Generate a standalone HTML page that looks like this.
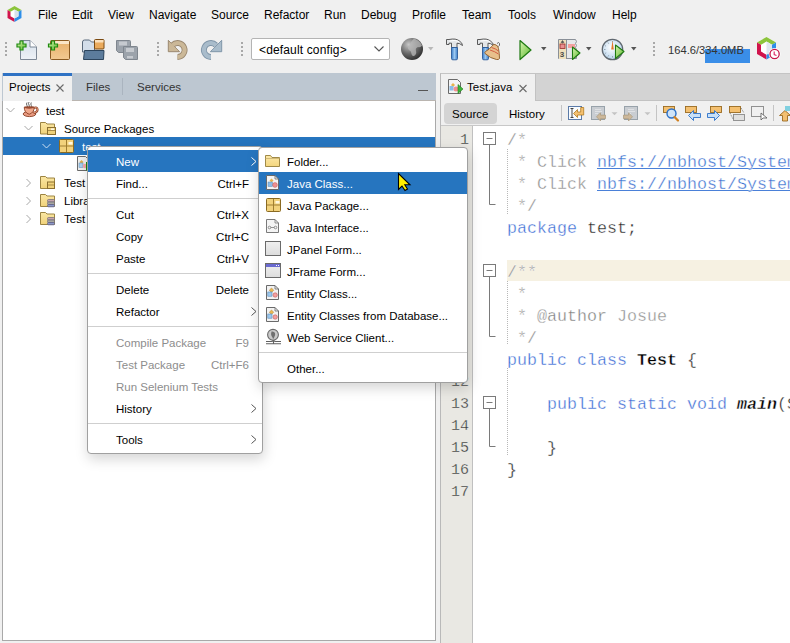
<!DOCTYPE html>
<html><head><meta charset="utf-8">
<style>
*{margin:0;padding:0;box-sizing:border-box}
html,body{width:790px;height:643px;overflow:hidden;background:#f0f0f0;font-family:"Liberation Sans",sans-serif;font-size:11.5px;color:#000}
.a{position:absolute;white-space:nowrap}
.mb{top:7px;font-size:12px;line-height:16px}
.tb svg{position:absolute}
.dots{position:absolute;width:2px;height:14px;background:repeating-linear-gradient(#a8a8a8 0 2px,transparent 2px 4px)}
#left{position:absolute;left:2px;top:73px;width:434px;height:568px;border:1px solid #a9a9a9;border-top:none;background:#fff}
#ltabs{position:absolute;left:2px;top:73px;width:434px;height:28px;background:#bdc7d1}
.row{position:absolute;left:3px;width:432px;height:18px;line-height:18px}
.row span{top:1px}
.code{font-family:"Liberation Mono",monospace;font-size:16.67px;line-height:22px;-webkit-text-stroke:0.35px #fff}
.cm{color:#8e8e8e}.kw{color:#3a6ad4}.lk{color:#3a6fd0;background:linear-gradient(#4a80d8,#4a80d8) 0 calc(100% - 3px)/100% 1px no-repeat}.code div{white-space:pre;height:22px}.code b{font-weight:bold;color:#000}
.ln{position:absolute;left:441px;width:28px;text-align:right;font-family:"Liberation Mono",monospace;font-size:15px;line-height:22px;color:#333;-webkit-text-stroke:0.3px #e9e8e3}
.pop{position:absolute;background:#fff;border:1px solid #a0a0a0;border-radius:4px;box-shadow:1px 5px 13px rgba(0,0,0,.17)}
.mi{position:absolute;left:0;right:0;height:22px;line-height:22px}
.mi .t{position:absolute;left:28px;top:1px}
.mi .k{position:absolute;right:13px;top:1px}
.hl{background:#2675bf;color:#fff}
.dis{color:#8d8d8d}
.sep{position:absolute;left:0;right:0;height:1px;background:#cfcfcf}
.arr{position:absolute;right:5px;top:7px;width:6px;height:9px}
</style></head><body>

<!-- menubar -->
<svg class="a" style="left:5.5px;top:5px" width="17" height="18" viewBox="0 0 17 18">
<path d="M8.5 1 L15.5 5 L15.5 13 L8.5 17 L1.5 13 L1.5 5 Z" fill="#fff"/>
<path d="M8.5 1 L15.5 5 L12.5 6.7 L8.5 4.4 L4.5 6.7 L1.5 5 Z" fill="#8cc43c"/>
<path d="M1.5 5 L4.5 6.7 L4.5 11.3 L8.5 13.6 L8.5 17 L1.5 13 Z" fill="#d0144c"/>
<path d="M15.5 5 L15.5 13 L8.5 17 L8.5 13.6 L12.5 11.3 L12.5 6.7 Z" fill="#2e8ee8"/>
<path d="M8.5 4.4 L12.5 6.7 L12.5 11.3 L8.5 13.6 Z" fill="#d8e2ec"/>
</svg>
<div class="a mb" style="left:38px">File</div>
<div class="a mb" style="left:72px">Edit</div>
<div class="a mb" style="left:108px">View</div>
<div class="a mb" style="left:149px">Navigate</div>
<div class="a mb" style="left:211px">Source</div>
<div class="a mb" style="left:264px">Refactor</div>
<div class="a mb" style="left:324px">Run</div>
<div class="a mb" style="left:361px">Debug</div>
<div class="a mb" style="left:412px">Profile</div>
<div class="a mb" style="left:462px">Team</div>
<div class="a mb" style="left:508px">Tools</div>
<div class="a mb" style="left:553px">Window</div>
<div class="a mb" style="left:612px">Help</div>

<!-- toolbar -->
<svg class="a" style="left:0;top:0" width="790" height="70" viewBox="0 0 790 70">
<defs>
<linearGradient id="gPage" x1="0" y1="0" x2="0" y2="1"><stop offset="0" stop-color="#d5dfea"/><stop offset="1" stop-color="#eef2f7"/></linearGradient>
<linearGradient id="gBox" x1="0" y1="0" x2="0" y2="1"><stop offset="0" stop-color="#e8b06a"/><stop offset="1" stop-color="#f2c992"/></linearGradient>
<linearGradient id="gGreen" x1="0" y1="0" x2="1" y2="1"><stop offset="0" stop-color="#d8f5b0"/><stop offset="1" stop-color="#5cb82e"/></linearGradient>
<radialGradient id="gGlobe" cx="0.35" cy="0.3" r="0.75"><stop offset="0" stop-color="#c8c8c8"/><stop offset="0.55" stop-color="#6a6a6a"/><stop offset="1" stop-color="#2e2e2e"/></radialGradient>
<linearGradient id="gBlue" x1="0" y1="0" x2="1" y2="0"><stop offset="0" stop-color="#3a7cc8"/><stop offset="0.5" stop-color="#9cc8f0"/><stop offset="1" stop-color="#3a7cc8"/></linearGradient>
<radialGradient id="gClock" cx="0.45" cy="0.4" r="0.6"><stop offset="0" stop-color="#ffffff"/><stop offset="1" stop-color="#b8d4ec"/></radialGradient>
</defs>
<!-- new file -->
<path d="M20.5 40.5 H30 L36.5 47 V59.5 H20.5 Z" fill="url(#gPage)" stroke="#7d8896"/>
<path d="M30 40.5 V47 H36.5" fill="#fff" stroke="#7d8896"/>
<path d="M20.5 41 h3 v3 h3 v3 h-3 v3 h-3 v-3 h-3 v-3 h3 z" fill="url(#gGreen)" stroke="#1f8a10" stroke-width="1.2" transform="translate(-0.5,0)"/>
<!-- new project -->
<rect x="50.5" y="40.5" width="19" height="19" rx="1" fill="url(#gBox)" stroke="#8a5a22"/>
<rect x="51" y="41" width="18" height="3" fill="#fbe6c8"/>
<path d="M51.5 41 h3 v3 h3 v3 h-3 v3 h-3 v-3 h-3 v-3 h3 z" fill="url(#gGreen)" stroke="#1f8a10" stroke-width="1.2"/>
<!-- open project -->
<path d="M82.5 42 q0-2 2-2 h5 l2 2 h3 v10 h-12 z" fill="#d3deea" stroke="#5a6a7c"/>
<rect x="94.5" y="39.5" width="9.5" height="9.5" rx="1" fill="#eaaa5c" stroke="#7a4a12"/>
<rect x="95" y="40" width="8.5" height="2.5" fill="#fae0bc"/>
<path d="M83.5 59.5 l1-9 h19.5 l-0.5 9 z" fill="#5c7c9c" stroke="#2c445c"/>
<!-- save all -->
<path d="M116.5 40.5 h13 q1 0 1 1 v11 h-12 l-2-2 z" fill="#9ca3ab" stroke="#7f868e"/>
<rect x="119" y="41.5" width="8" height="4" fill="#c6cacf"/>
<path d="M123.5 46.5 h13 q1 0 1 1 v12 h-12 l-2-2 z" fill="#9ca3ab" stroke="#7f868e"/>
<rect x="126" y="48" width="8" height="4" fill="#c6cacf"/>
<rect x="127" y="56" width="6" height="2.5" fill="#c6cacf"/>
<!-- undo -->
<path d="M172.6 45.1 A7 7 0 1 1 177.5 57" fill="none" stroke="#9a8870" stroke-width="5.8"/>
<path d="M168.3 40.3 L168.3 51.7 L179.6 51.7 Z" fill="#cbb898" stroke="#9a8870" stroke-width="1" stroke-linejoin="round"/>
<path d="M172.6 45.1 A7 7 0 1 1 177.5 57" fill="none" stroke="#cbb898" stroke-width="4"/>
<path d="M169 41.5 L169 51 L178.5 51 Z" fill="#cbb898"/>
<!-- redo -->
<path d="M211 57 A7 7 0 1 1 215.9 45.1" fill="none" stroke="#7f95a8" stroke-width="5.8"/>
<path d="M221.7 40.3 L221.7 51.7 L210.4 51.7 Z" fill="#a9bccb" stroke="#7f95a8" stroke-width="1" stroke-linejoin="round"/>
<path d="M211 57 A7 7 0 1 1 215.9 45.1" fill="none" stroke="#a9bccb" stroke-width="4"/>
<path d="M221 41.5 L221 51 L211.5 51 Z" fill="#a9bccb"/>
<!-- globe -->
<circle cx="412" cy="49" r="11" fill="url(#gGlobe)"/>
<path d="M414 38.5 q6 2 8 7 q-1.5 2.5 -4 1.5 q-3 1 -2 4 q1 3 -2 5 q-2 0.5 -2.5 -2 q0 -3 -2.5 -4 q-2 -2 0 -4 q2 -1 1.5 -3 q1 -2 3.5 -4.5z" fill="#b8b8b8" opacity="0.75"/>
<path d="M428 47 h5.5 l-2.75 3.5z" fill="#b8b8b8"/>
<!-- hammer -->
<g transform="translate(0,0)">
<path d="M446.5 39.5 h2.5 q7 -1.5 10.5 1.5 q3 2 3 4.5 q-3 -2.5 -5.5 -2.3 v4.3 h-5.5 v-4.3 h-2.5 v1.3 h-2.5 z" fill="#e4e6e8" stroke="#4a4a4a" stroke-width="0.9" stroke-linejoin="round"/>
<path d="M449.5 41 q6 -1.3 9.5 0.5" stroke="#fff" stroke-width="1" fill="none"/>
<path d="M451.5 47.5 h6 v11 q0 1.3 -1.3 1.3 h-3.4 q-1.3 0 -1.3 -1.3 z" fill="url(#gBlue)" stroke="#2a5a98" stroke-width="0.9"/>
</g>
<!-- clean build -->
<g transform="translate(31,0)">
<path d="M446.5 39.5 h2.5 q7 -1.5 10.5 1.5 q3 2 3 4.5 q-3 -2.5 -5.5 -2.3 v4.3 h-5.5 v-4.3 h-2.5 v1.3 h-2.5 z" fill="#e4e6e8" stroke="#4a4a4a" stroke-width="0.9" stroke-linejoin="round"/>
<path d="M449.5 41 q6 -1.3 9.5 0.5" stroke="#fff" stroke-width="1" fill="none"/>
<path d="M451.5 47.5 h6 v11 q0 1.3 -1.3 1.3 h-3.4 q-1.3 0 -1.3 -1.3 z" fill="url(#gBlue)" stroke="#2a5a98" stroke-width="0.9"/>
</g>
<path d="M497 43.5 q2 -2 2.5 0 q0.5 2 -1 3" fill="none" stroke="#5a5a5a" stroke-width="0.9"/>
<path d="M495 44.5 q3.5 1 3.5 4 q1 5 1 10 q-1 1.5 -3 1 q-6 -1 -11.5 -6 q-0.5 -1.5 0.5 -2 q4 -2 6 -5 q2 -2.5 3.5 -2z" fill="#e8c08c" stroke="#8a5a28" stroke-width="0.9"/>
<path d="M491.5 47.5 q4 1 7 3.5 M490 50 q5 1.5 8.5 4" stroke="#d0503a" stroke-width="0.9" fill="none"/>
<!-- run -->
<path d="M520 40.5 L531 50 L520 59.5 Z" fill="url(#gGreen)" stroke="#1e7a12" stroke-width="1.2" stroke-linejoin="round"/>
<path d="M541 47 h5.5 l-2.75 3.5z" fill="#555"/>
<!-- debug -->
<path d="M558.5 39.5 h17 l1 2 -1 2 1 2 -1 2 1 2 v9 h-18 z" fill="#e6e8ea" stroke="#8a9098"/>
<rect x="559" y="40" width="7" height="19" fill="#eee0bc"/>
<line x1="566.5" y1="40" x2="566.5" y2="59" stroke="#8a9098"/>
<path d="M562.5 40.5 l-1.5 2 h3z M562.5 42 v1.5" fill="#555" stroke="#555" stroke-width="0.6"/>
<rect x="560" y="44" width="5" height="4.5" fill="#e89090" stroke="#9a2a2a" stroke-width="0.8"/>
<text x="559.8" y="56.5" font-family="Liberation Sans" font-size="8" font-weight="bold" fill="#4a4a4a">3</text>
<rect x="568" y="44" width="7" height="4" fill="#f4a0a0"/>
<path d="M572.5 47 L580 53 L572.5 59.5 Z" fill="url(#gGreen)" stroke="#1e7a12" stroke-width="1.1" stroke-linejoin="round"/>
<path d="M586 47 h5.5 l-2.75 3.5z" fill="#555"/>
<!-- profile -->
<circle cx="612.5" cy="49.5" r="10.2" fill="url(#gClock)" stroke="#606870" stroke-width="1.3"/>
<path d="M604 49.5 h1.5 M612.5 41 v1.5 M608 42.5 l0.7 1.2 M604.8 45.5 l1.2 0.7 M605 53.5 l1.2 -0.7 M608 56.5 l0.7 -1.2 M612.5 57.5 v-1.5" stroke="#7a8a9a" stroke-width="0.7"/>
<path d="M612.5 40.5 l1.3 9 h-2.6z" fill="#e07828"/>
<path d="M615.5 45 L624 51.5 L615.5 58.5 Z" fill="url(#gGreen)" stroke="#1e7a12" stroke-width="1.1" stroke-linejoin="round"/>
<path d="M631 47 h5.5 l-2.75 3.5z" fill="#555"/>
<!-- nb logo -->
<path d="M766.5 37 L776 42.5 L776 54 L766.5 59.5 L757 54 L757 42.5 Z" fill="#fff"/>
<path d="M766.5 37 L776 42.5 L772 44.8 L766.5 41.6 L761 44.8 L757 42.5 Z" fill="#8cc43c"/>
<path d="M757 42.5 L761 44.8 L761 51.6 L766.5 54.8 L766.5 59.5 L757 54 Z" fill="#d0144c"/>
<path d="M776 42.5 L776 54 L766.5 59.5 L766.5 54.8 L772 51.6 L772 44.8 Z" fill="#2e8ee8"/>
<path d="M766.5 41.6 L772 44.8 L772 51.6 L766.5 54.8 Z" fill="#dfe7ef"/>
<circle cx="774.6" cy="54" r="6" fill="#fff"/>
<circle cx="774.6" cy="54" r="4.6" fill="#fff" stroke="#c8174a" stroke-width="1.3"/>
<path d="M774.2 51.5 V54.5 L776.5 55.5" fill="none" stroke="#e0306a" stroke-width="1.2"/>
</svg>

<div class="tb">
<div class="dots" style="left:5px;top:42px"></div>
<div class="dots" style="left:157px;top:42px"></div>
<div class="dots" style="left:241px;top:42px"></div>
<div class="dots" style="left:653px;top:42px"></div>
</div>

<!-- config combo -->
<div class="a" style="left:251px;top:38px;width:139px;height:22px;background:#fff;border:1px solid #b4b4b4;border-radius:2px;line-height:22px;padding-left:7px;font-size:12px;letter-spacing:0.15px">&lt;default config&gt;</div>
<svg class="a" style="left:374px;top:46px" width="10" height="7"><path d="M0.5 0.5 L5 5 L9.5 0.5" fill="none" stroke="#555" stroke-width="1.1"/></svg>

<!-- memory -->
<div class="a" style="left:705px;top:49px;width:45px;height:14px;background:#3a8ee8"></div>
<div class="a" style="left:668px;top:43.6px;font-size:11.2px;line-height:13px;color:#333">164.6/334.0MB</div>

<!-- left panel -->
<div id="left"></div>
<div id="ltabs"></div>
<div class="a" style="left:3px;top:73px;width:69px;height:28px;background:#f0f0f0;border-top:3px solid #2f72c4"></div>
<div class="a" style="left:9px;top:81px;font-size:11.5px">Projects</div>
<svg class="a" style="left:56px;top:84px" width="8" height="8"><path d="M0.5 0.5 L7.5 7.5 M7.5 0.5 L0.5 7.5" stroke="#6a6a6a" stroke-width="1.1"/></svg>
<div class="a" style="left:86px;top:81px;color:#333">Files</div>
<div class="a" style="left:122px;top:78px;width:1px;height:17px;background:#aab4bf"></div>
<div class="a" style="left:137px;top:81px;color:#333">Services</div>
<div class="a" style="left:418px;top:90px;width:10px;height:1px;background:#555"></div>
<div class="a" style="left:72px;top:100px;width:364px;height:1px;background:#bab5b0"></div>

<!-- tree -->
<div class="row" style="top:101px"><span class="a" style="left:43px">test</span></div>
<div class="row" style="top:119px"><span class="a" style="left:61px">Source Packages</span></div>
<div class="row hl" style="top:137px"><span class="a" style="left:79px">test</span></div>
<div class="row" style="top:173px"><span class="a" style="left:61px">Test Packages</span></div>
<div class="row" style="top:191px"><span class="a" style="left:61px">Libraries</span></div>
<div class="row" style="top:209px"><span class="a" style="left:61px">Test Libraries</span></div>

<svg class="a" style="left:0;top:100px" width="100" height="130" viewBox="0 100 100 130">
<defs>
<linearGradient id="gFold" x1="0" y1="0" x2="0" y2="1"><stop offset="0" stop-color="#fbe7a4"/><stop offset="1" stop-color="#f0d27a"/></linearGradient>
</defs>
<g fill="none" stroke="#a8a8a8" stroke-width="1">
<path d="M6.5 108 L10.5 112 L14.5 108"/>
<path d="M24.5 126 L28.5 130 L32.5 126"/>
<path d="M26.5 179 L30.5 183 L26.5 187"/>
<path d="M26.5 197 L30.5 201 L26.5 205"/>
<path d="M26.5 215 L30.5 219 L26.5 223"/>
</g>
<path d="M42.5 144 L46.5 148 L50.5 144" fill="none" stroke="#cfe0f2" stroke-width="1"/>
<!-- coffee -->
<path d="M27 102.5 q-1 1.5 0 3 q1 1.5 0 3 M29 102 q-1 1.5 0 3 q1 1.5 0 3 M31.3 102.5 q-1 1.5 0 3 q1 1.5 0 2.5" fill="none" stroke="#555" stroke-width="0.9"/>
<ellipse cx="29.5" cy="114" rx="6.3" ry="2.6" fill="#e89a80" stroke="#8a3e24" stroke-width="0.9"/>
<path d="M33.5 108 q4 -1.5 4 1.8 q0 2.5 -4 3.2" fill="none" stroke="#8a3e24" stroke-width="2.2"/>
<path d="M33.5 108 q4 -1.5 4 1.8 q0 2.5 -4 3.2" fill="none" stroke="#f0a888" stroke-width="0.9"/>
<path d="M24.3 107 h9.8 q0.3 5.5 -4.9 7.3 q-5.2 -1.8 -4.9 -7.3z" fill="#f0a88c" stroke="#8a3e24" stroke-width="0.9"/>
<ellipse cx="29.2" cy="107.6" rx="4.6" ry="1.1" fill="#9a4a30"/>
<!-- source packages folder -->
<path d="M40.5 122.5 h5 l1.5 1.5 h7.5 v10 h-14 z" fill="url(#gFold)" stroke="#9c8442"/>
<rect x="47.5" y="127.5" width="8" height="7" fill="#f0d27a" stroke="#8c7030"/>
<path d="M48 130.5 h7" stroke="#8c7030" stroke-width="0.7"/>
<rect x="51" y="128.5" width="3" height="1.3" fill="#fff"/>
<!-- package -->
<rect x="59.5" y="139.5" width="14" height="13" rx="1" fill="#f2d27c" stroke="#8a6a22"/>
<path d="M60 146 h13 M66.5 140 v12" stroke="#a07e30" stroke-width="1"/>
<rect x="68.5" y="142" width="4" height="2.5" fill="#fff8e0"/>
<!-- java file -->
<path d="M77.5 156.5 h8 l3 3 v11 h-11 z" fill="#f0f0f0" stroke="#6a6a6a"/>
<path d="M81.5 160 l2 2 -2 2 -2 -2z" fill="#e0b050"/>
<rect x="79" y="163" width="4" height="4.5" fill="#a8d0f0" stroke="#5a8ab8" stroke-width="0.5"/>
<circle cx="85" cy="166" r="2.3" fill="#f4a8a8"/>
<rect x="86" y="162" width="1.5" height="8.5" fill="#1a8a1a"/>
<!-- folders -->
<g>
<path d="M40.5 176.5 h5 l1.5 1.5 h7.5 v10.5 h-14 z" fill="url(#gFold)" stroke="#9c8442"/>
<rect x="47.5" y="182" width="7" height="6.5" fill="#f0d27a" stroke="#8c7030"/>
<path d="M48 185 h6" stroke="#8c7030" stroke-width="0.7"/>
</g>
<g>
<path d="M40.5 194.5 h5 l1.5 1.5 h7.5 v10.5 h-14 z" fill="url(#gFold)" stroke="#9c8442"/>
<rect x="47.5" y="199.5" width="7" height="2.5" rx="1" fill="#c8a4ac" stroke="#6a6a7a" stroke-width="0.7"/>
<rect x="47.5" y="202" width="7" height="2.5" rx="1" fill="#a8a8a0" stroke="#6a6a7a" stroke-width="0.7"/>
<rect x="47.5" y="204.5" width="7" height="2.3" rx="1" fill="#8c98c8" stroke="#5a5a8a" stroke-width="0.7"/>
</g>
<g>
<path d="M40.5 212.5 h5 l1.5 1.5 h7.5 v10.5 h-14 z" fill="url(#gFold)" stroke="#9c8442"/>
<rect x="47.5" y="217.5" width="7" height="2.5" rx="1" fill="#c8a4ac" stroke="#6a6a7a" stroke-width="0.7"/>
<rect x="47.5" y="220" width="7" height="2.5" rx="1" fill="#a8a8a0" stroke="#6a6a7a" stroke-width="0.7"/>
<rect x="47.5" y="222.5" width="7" height="2.3" rx="1" fill="#8c98c8" stroke="#5a5a8a" stroke-width="0.7"/>
</g>
</svg>

<!-- editor -->
<div class="a" style="left:440px;top:73px;width:350px;height:570px;background:#fff;border-left:1px solid #b9b9b9;border-top:1px solid #c4c4c4"></div>
<div class="a" style="left:441px;top:74px;width:349px;height:27px;background:#d3d3d3"></div>
<div class="a" style="left:441px;top:74px;width:95px;height:27px;background:#f0f0f0;border-right:1px solid #c2c2c2"></div>
<div class="a" style="left:536px;top:100px;width:254px;height:1px;background:#c2c2c2"></div>
<div class="a" style="left:467px;top:80.5px">Test.java</div>
<div class="a" style="left:441px;top:101px;width:349px;height:25px;background:#f0f0f0;border-bottom:1px solid #c8c8c8"></div>
<div class="a" style="left:444px;top:103px;width:53px;height:21px;background:#d4d4d4;border-radius:4px"></div>
<div class="a" style="left:452px;top:107.5px">Source</div>
<div class="a" style="left:509px;top:107.5px">History</div>
<div class="a" style="left:441px;top:126px;width:32px;height:517px;background:#e9e8e3;border-right:1px solid #c0c0c0"></div>


<svg class="a" style="left:440px;top:72px" width="350" height="54" viewBox="440 72 350 54">
<!-- tab icon -->
<path d="M448.5 79.5 h9 l3 3 v11 h-12 z" fill="#f4f4f4" stroke="#6a6a6a"/>
<path d="M453 83 l2 2 -2 2 -2 -2z" fill="#e8b44c"/>
<rect x="449.5" y="86" width="4" height="4.5" fill="#8cbce8"/>
<circle cx="456" cy="89" r="2.5" fill="#f09090"/>
<path d="M458 84.5 L463 89 L458 93.5 Z" fill="#3cb43c" stroke="#1e7a12" stroke-width="0.6"/>
<path d="M519.5 85 l7 7 M526.5 85 l-7 7" stroke="#6a6a6a" stroke-width="1.1"/>
<!-- separators -->
<path d="M561.5 105 v16 M656.5 105 v16 M773.5 105 v16" stroke="#c4c4c4"/>
<!-- last edit -->
<rect x="568.5" y="106.5" width="13" height="13" fill="#f8fbfe" stroke="#5a7aa8"/>
<path d="M570.5 108.5 h3 M572 108.5 v9 M570.5 117.5 h3" stroke="#333" stroke-width="0.9"/>
<path d="M573.5 113.5 l4 -4 v2.5 h3.2 v-4.5 h3 v7.5 h-6.2 v2.5z" fill="#f4c070" stroke="#b07a20" stroke-width="0.8"/>
<!-- back -->
<rect x="591.5" y="106.5" width="13" height="13" fill="#c9cdd2" stroke="#98a2aa"/>
<path d="M595 109.5 h6 M595 111.5 h7 M595 113.5 h3" stroke="#e4e6e8" stroke-width="0.8"/>
<path d="M596.5 116.8 l4 -4 v2.3 h5 v3.6 h-5 v2.3z" fill="#cdb89a" stroke="#a8987c" stroke-width="0.7"/>
<path d="M611.5 112.3 h6 l-3 3z" fill="#c4c4c4"/>
<rect x="624.5" y="106.5" width="13" height="13" fill="#c9cdd2" stroke="#98a2aa"/>
<path d="M628 109.5 h6 M628 111.5 h7 M628 113.5 h3" stroke="#e4e6e8" stroke-width="0.8"/>
<path d="M632.5 116.8 l-4 -4 v2.3 h-5 v3.6 h5 v2.3z" fill="#cdb89a" stroke="#a8987c" stroke-width="0.7"/>
<path d="M644.5 112.3 h6 l-3 3z" fill="#c4c4c4"/>
<!-- search -->
<rect x="663.5" y="106.5" width="11" height="6" fill="#f4c070" stroke="#9a6a20" stroke-width="0.9"/>
<circle cx="671.5" cy="113.5" r="4.5" fill="#d0e4f8" stroke="#2a70c8" stroke-width="1.4"/>
<path d="M674.5 117 l3.5 3.5" stroke="#d08020" stroke-width="2.2" stroke-linecap="round"/>
<!-- prev -->
<rect x="685.5" y="106.5" width="11" height="6" fill="#f4c070" stroke="#9a6a20" stroke-width="0.9"/>
<path d="M688.5 115.5 l5 -5 v3 h7 v4 h-7 v3z" fill="#c8e0f8" stroke="#2a70c8" stroke-width="0.9"/>
<!-- next -->
<rect x="710.5" y="106.5" width="11" height="6" fill="#f4c070" stroke="#9a6a20" stroke-width="0.9"/>
<path d="M719.5 115.5 l-5 -5 v3 h-7 v4 h7 v3z" fill="#c8e0f8" stroke="#2a70c8" stroke-width="0.9"/>
<!-- toggle -->
<rect x="729.5" y="106.5" width="11" height="6" fill="#f4c070" stroke="#9a6a20" stroke-width="0.9"/>
<rect x="733.5" y="114.5" width="11" height="6" fill="#e0e0e0" stroke="#8a8a8a" stroke-width="0.9"/>
<path d="M741 108 l3 5 M730 113 l3 6" stroke="#555" stroke-width="0.8" stroke-dasharray="1 1"/>
<!-- rect select -->
<rect x="751.5" y="106.5" width="12" height="10" fill="none" stroke="#333" stroke-width="1" stroke-dasharray="1 1"/>
<path d="M761 113 v7 l2 -2 h4z" fill="#fff" stroke="#555" stroke-width="0.8"/>
<!-- up -->
<path d="M785 110.5 l-5.5 5 h3 v5.5 h5 v-5.5 h3z" fill="#f4c070" stroke="#9a6a20" stroke-width="0.9"/>
<rect x="785" y="106" width="6" height="5" fill="#80d0e0"/>
</svg>
<svg class="a" style="left:390px;top:166px;z-index:5" width="30" height="30" viewBox="390 166 30 30">
<path d="M398.5 173.5 V189.5 L402 186 L405 190.5 L407.5 189 L404.8 184.8 L410 184.8 Z" fill="#ffee00" stroke="#000" stroke-width="1.1" stroke-linejoin="miter"/>
</svg>

<!-- code -->
<div class="a" style="left:507px;top:260px;width:283px;height:21px;background:#f6f1e2"></div>
<div class="code a" style="left:507px;top:130px;color:#222">
<div class="cm">/*</div>
<div class="cm"> * Click <span class="lk">nbfs://nbhost/SystemFileSystem/Templates/Licenses/license-default.txt</span></div>
<div class="cm"> * Click <span class="lk">nbfs://nbhost/SystemFileSystem/Templates/Classes/Class.java</span></div>
<div class="cm"> */</div>
<div><span class="kw">package</span> test;</div>
<div>&nbsp;</div>
<div class="cm">/**</div>
<div class="cm"> *</div>
<div class="cm"> * <span style="color:#7c7c7c">@author</span> Josue</div>
<div class="cm"> */</div>
<div><span class="kw">public</span> <span class="kw">class</span> <b>Test</b> {</div>
<div>&nbsp;</div>
<div>    <span class="kw">public</span> <span class="kw">static</span> <span class="kw">void</span> <b><i>main</i></b>(String[] args) {</div>
<div>&nbsp;</div>
<div>    }</div>
<div>}</div>
</div>
<div class="ln" style="top:130px">1</div>
<div class="ln" style="top:372px">12</div>
<div class="ln" style="top:394px">13</div>
<div class="ln" style="top:416px">14</div>
<div class="ln" style="top:438px">15</div>
<div class="ln" style="top:460px">16</div>
<div class="ln" style="top:482px">17</div>
<svg class="a" style="left:506px;top:140px" width="3" height="330" viewBox="506 140 3 330"><path d="M507.5 149 V214 M507.5 281 V345 M507.5 368 V456" stroke="#b8b8b8" stroke-width="1" stroke-dasharray="1 1"/></svg>
<!-- fold marks -->
<svg class="a" style="left:480px;top:126px" width="20" height="340" viewBox="0 0 20 340">
<g fill="#fff" stroke="#7a7a7a" stroke-width="1">
<rect x="3.5" y="6.5" width="12" height="12"/>
<rect x="3.5" y="138.5" width="12" height="12"/>
<rect x="3.5" y="270.5" width="12" height="12"/>
</g>
<g fill="none" stroke="#7a7a7a" stroke-width="1">
<path d="M6.5 12.5 H12.5 M6.5 144.5 H12.5 M6.5 276.5 H12.5"/>
<path d="M9.5 18.5 V78.5 H15.5 M9.5 150.5 V210.5 H15.5 M9.5 282.5 V320.5 H15.5"/>
</g>
</svg>

<!-- popup main -->
<div class="pop" style="left:87px;top:146px;width:176px;height:308px">
<div class="mi hl" style="top:3px"><span class="t">New</span><svg class="arr" viewBox="0 0 6 9"><path d="M0.5 0.5 L5 4.5 L0.5 8.5" fill="none" stroke="#fff" stroke-width="1"/></svg></div>
<div class="mi" style="top:25px"><span class="t">Find...</span><span class="k">Ctrl+F</span></div>
<div class="sep" style="top:51px"></div>
<div class="mi" style="top:56px"><span class="t">Cut</span><span class="k">Ctrl+X</span></div>
<div class="mi" style="top:78px"><span class="t">Copy</span><span class="k">Ctrl+C</span></div>
<div class="mi" style="top:100px"><span class="t">Paste</span><span class="k">Ctrl+V</span></div>
<div class="sep" style="top:126px"></div>
<div class="mi" style="top:131px"><span class="t">Delete</span><span class="k">Delete</span></div>
<div class="mi" style="top:153px"><span class="t">Refactor</span><svg class="arr" viewBox="0 0 6 9"><path d="M0.5 0.5 L5 4.5 L0.5 8.5" fill="none" stroke="#555" stroke-width="1"/></svg></div>
<div class="sep" style="top:179px"></div>
<div class="mi dis" style="top:184px"><span class="t">Compile Package</span><span class="k">F9</span></div>
<div class="mi dis" style="top:206px"><span class="t">Test Package</span><span class="k">Ctrl+F6</span></div>
<div class="mi dis" style="top:228px"><span class="t">Run Selenium Tests</span></div>
<div class="mi" style="top:250px"><span class="t">History</span><svg class="arr" viewBox="0 0 6 9"><path d="M0.5 0.5 L5 4.5 L0.5 8.5" fill="none" stroke="#555" stroke-width="1"/></svg></div>
<div class="sep" style="top:276px"></div>
<div class="mi" style="top:281px"><span class="t">Tools</span><svg class="arr" viewBox="0 0 6 9"><path d="M0.5 0.5 L5 4.5 L0.5 8.5" fill="none" stroke="#555" stroke-width="1"/></svg></div>
</div>
<div class="pop" style="left:258px;top:147px;width:210px;height:236px">
<div class="mi" style="top:2px"><span class="t">Folder...</span></div>
<div class="mi hl" style="top:24px"><span class="t">Java Class...</span></div>
<div class="mi" style="top:46px"><span class="t">Java Package...</span></div>
<div class="mi" style="top:68px"><span class="t">Java Interface...</span></div>
<div class="mi" style="top:90px"><span class="t">JPanel Form...</span></div>
<div class="mi" style="top:112px"><span class="t">JFrame Form...</span></div>
<div class="mi" style="top:134px"><span class="t">Entity Class...</span></div>
<div class="mi" style="top:156px"><span class="t">Entity Classes from Database...</span></div>
<div class="mi" style="top:178px"><span class="t">Web Service Client...</span></div>
<div class="sep" style="top:204px"></div>
<div class="mi" style="top:209px"><span class="t">Other...</span></div>
</div>

<svg class="a" style="left:260px;top:150px" width="30" height="200" viewBox="260 150 30 200">
<defs>
<linearGradient id="gFold2" x1="0" y1="0" x2="0" y2="1"><stop offset="0" stop-color="#fce8a8"/><stop offset="1" stop-color="#f4d67e"/></linearGradient>
<linearGradient id="gPanel" x1="0" y1="0" x2="0" y2="1"><stop offset="0" stop-color="#f0f0f0"/><stop offset="1" stop-color="#dcdcdc"/></linearGradient>
</defs>
<!-- folder -->
<path d="M265.5 166.5 v-11 h5 l1.5 2 h7.5 v9 z" fill="url(#gFold2)" stroke="#a08a48"/>
<path d="M265.5 158.5 h14" stroke="#c8b070" stroke-width="0.8"/>
<!-- java class (on blue) -->
<path d="M266.5 175.5 h8.5 l3.5 3.5 v10.5 h-12 z" fill="#f4f4f4" stroke="#6a6a6a"/>
<path d="M275 175.5 v3.5 h3.5" fill="none" stroke="#6a6a6a" stroke-width="0.8"/>
<path d="M271.5 178.5 l2 2 -2 2 -2 -2z" fill="#e8b44c"/>
<rect x="268" y="182" width="4.5" height="4.5" fill="#8cbce8" stroke="#5a8ab8" stroke-width="0.5"/>
<circle cx="275" cy="185" r="2.4" fill="#f09090" stroke="#c05a5a" stroke-width="0.5"/>
<!-- package -->
<rect x="266.5" y="198.5" width="14" height="13" rx="1" fill="#f2d27c" stroke="#8a6a22"/>
<path d="M267 205 h13 M273.5 199 v12" stroke="#a07e30" stroke-width="1"/>
<rect x="275.5" y="201" width="4" height="2.5" fill="#fff8e0"/>
<!-- interface -->
<path d="M266.5 219.5 h8.5 l3.5 3.5 v9.5 h-12 z" fill="#f4f4f4" stroke="#7a7a7a"/>
<path d="M275 219.5 v3.5 h3.5" fill="none" stroke="#7a7a7a" stroke-width="0.8"/>
<circle cx="269.5" cy="227.5" r="1.3" fill="none" stroke="#7a7a7a" stroke-width="0.8"/>
<circle cx="275.5" cy="227.5" r="1.3" fill="none" stroke="#7a7a7a" stroke-width="0.8"/>
<path d="M270.8 227.5 h3.4" stroke="#7a7a7a" stroke-width="0.8"/>
<!-- jpanel -->
<rect x="265.5" y="241.5" width="15" height="14" fill="url(#gPanel)" stroke="#6a6a6a"/>
<!-- jframe -->
<rect x="265.5" y="263.5" width="15" height="14" fill="url(#gPanel)" stroke="#6a6a6a"/>
<rect x="266" y="264" width="14" height="3" fill="#6a6ad0"/>
<path d="M276 265.5 h1 M278 265.5 h1" stroke="#fff" stroke-width="1"/>
<!-- entity class -->
<path d="M266.5 285.5 h8.5 l3.5 3.5 v10.5 h-12 z" fill="#f2f2f2" stroke="#6a6a6a"/>
<path d="M275 285.5 v3.5 h3.5" fill="none" stroke="#6a6a6a" stroke-width="0.8"/>
<path d="M271.5 288 l2.2 2.2 -2.2 2.2 -2.2 -2.2z" fill="#eab850" stroke="#b08030" stroke-width="0.5"/>
<rect x="267.8" y="292" width="4.2" height="4.2" fill="#9cc8ee" stroke="#5a8ab8" stroke-width="0.6"/>
<circle cx="275.2" cy="295" r="2.2" fill="#f4a0a0" stroke="#c05a5a" stroke-width="0.6"/>
<path d="M266.5 307.5 h8.5 l3.5 3.5 v10.5 h-12 z" fill="#f2f2f2" stroke="#6a6a6a"/>
<path d="M275 307.5 v3.5 h3.5" fill="none" stroke="#6a6a6a" stroke-width="0.8"/>
<path d="M271.5 310 l2.2 2.2 -2.2 2.2 -2.2 -2.2z" fill="#eab850" stroke="#b08030" stroke-width="0.5"/>
<rect x="267.8" y="314" width="4.2" height="4.2" fill="#9cc8ee" stroke="#5a8ab8" stroke-width="0.6"/>
<circle cx="275.2" cy="317" r="2.2" fill="#f4a0a0" stroke="#c05a5a" stroke-width="0.6"/>
<!-- web service -->
<circle cx="273" cy="334.8" r="5.4" fill="#cacaca" stroke="#6a6a6a" stroke-width="1.1"/>
<path d="M271.5 331.5 q2.5 -0.5 3.5 1.5 q0.5 2 -0.5 3.5 q-0.5 2 -1.5 2.5 q-0.5 -2 -1.5 -3 q-1 -1.5 0 -4.5z" fill="#707070"/>
<path d="M273.5 340.3 v3.2 M266 341.5 h5.5 q1 0 1.5 -1 M281 341.5 h-5.5 q-1 0 -1.5 -1 M266 343.7 h15" fill="none" stroke="#606060" stroke-width="1.1"/>
</svg>
</body></html>
